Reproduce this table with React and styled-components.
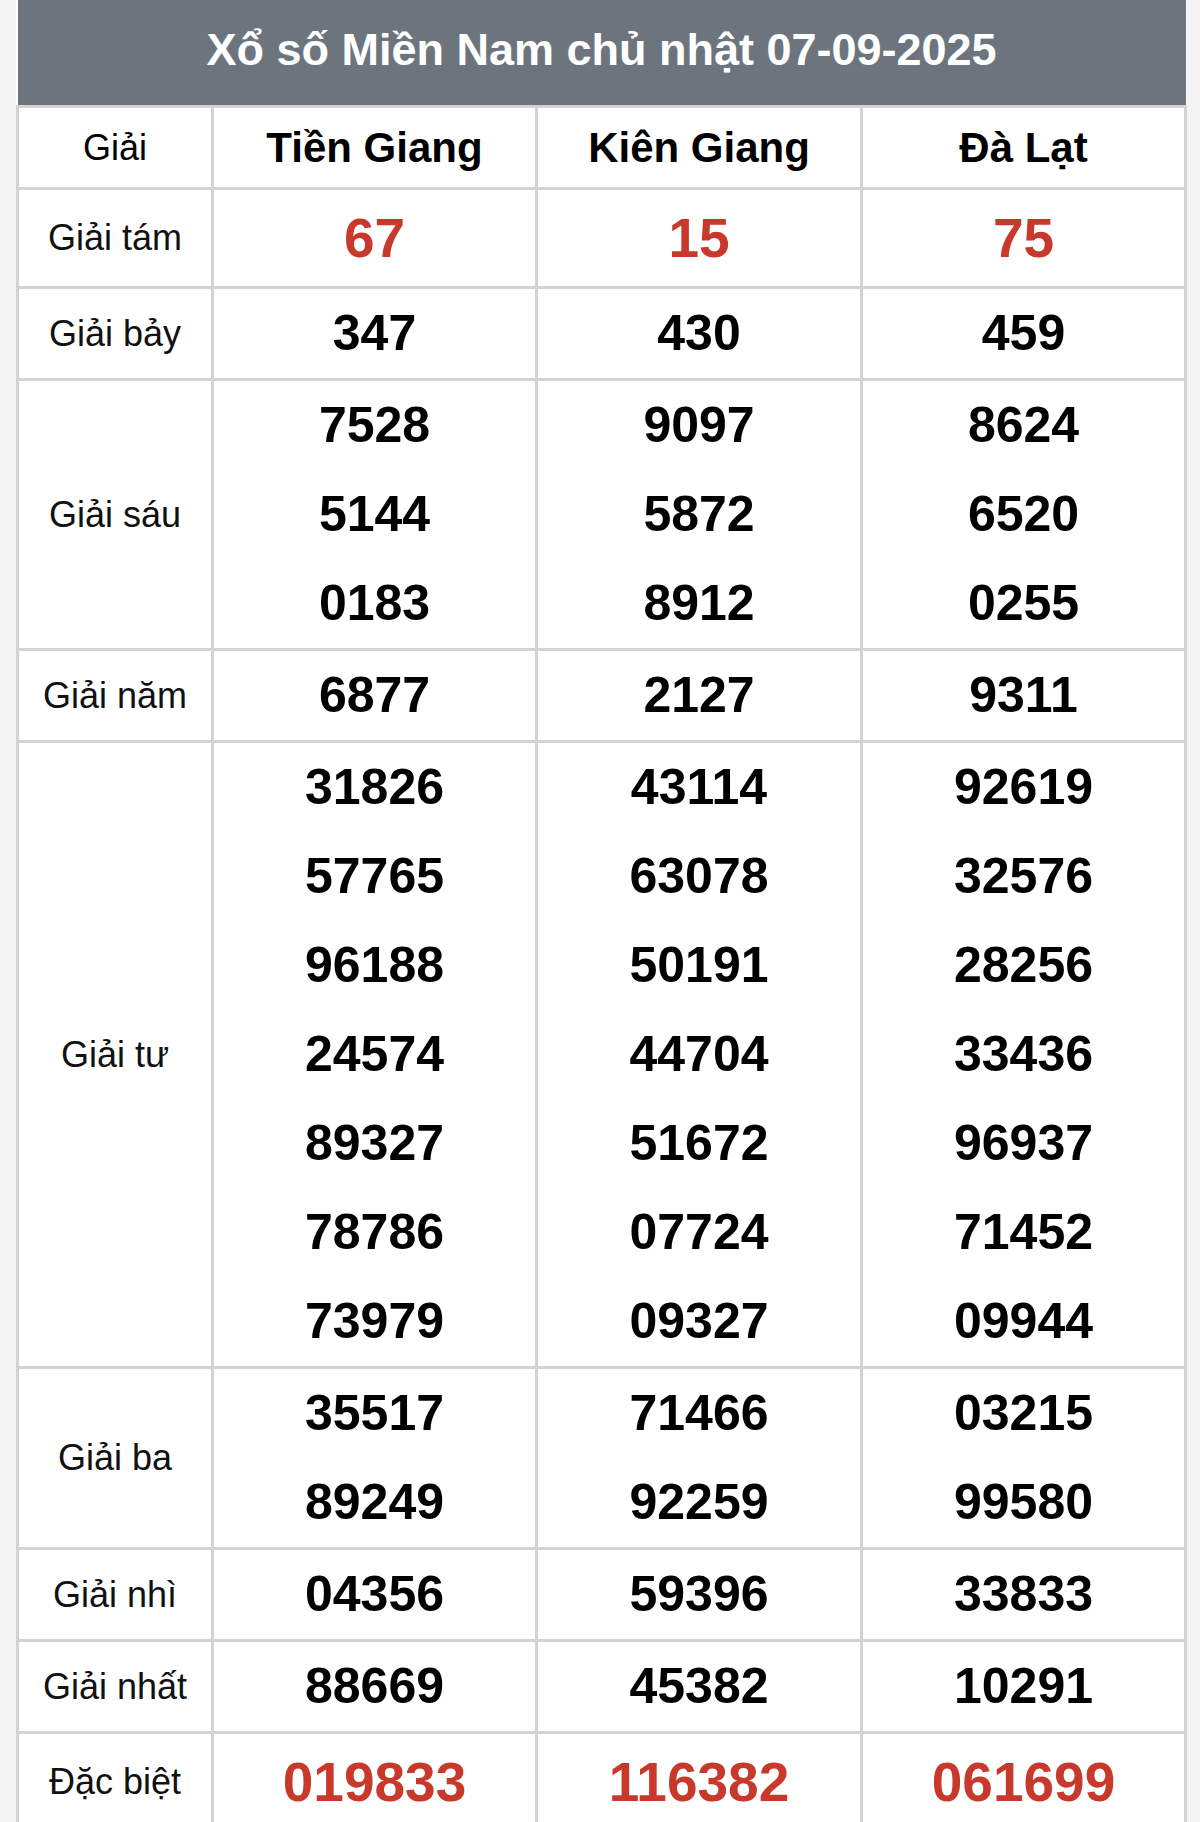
import React from 'react';
import styled, { createGlobalStyle } from 'styled-components';

const GlobalStyle = createGlobalStyle`
  body {
    margin: 0;
    background: #f4f4f4;
    font-family: "Liberation Sans", Arial, sans-serif;
  }
`;

const Wrapper = styled.div`
  padding: 0 16px;
`;

const ResultTable = styled.table`
  width: 100%;
  table-layout: fixed;
  border-collapse: collapse;
  background: #fff;
  color: #000;
  text-align: center;

  & td,
  & th {
    border: 3px solid #d3d3d3;
    padding: 0;
  }
`;

const Col = styled.col`
  width: ${(props) => props.$width}px;
`;

const TitleCell = styled.th`
  height: 99px;
  background: #6c757d;
  color: #fff;
  font-size: 45px;
  font-weight: bold;
  && {
    border: none;
    padding-bottom: 6px;
  }
`;

const HeadCell = styled.th`
  height: 79px;
  font-size: ${(props) => (props.$plain ? '36px' : '42px')};
  font-weight: ${(props) => (props.$plain ? 'normal' : 'bold')};
  color: #000;
`;

const LabelCell = styled.td`
  font-size: 36px;
  color: #111;
  vertical-align: middle;
`;

const NumberCell = styled.td`
  vertical-align: middle;
`;

const NumberLine = styled.div`
  font-weight: bold;
  font-size: ${(props) => (props.$big ? '55px' : '50px')};
  line-height: ${(props) => (props.$big ? '96px' : '89px')};
  color: ${(props) => (props.$big ? '#c8392b' : '#000')};
`;

const provinces = ['Tiền Giang', 'Kiên Giang', 'Đà Lạt'];

const prizes = [
  { label: 'Giải tám', big: true, values: [['67'], ['15'], ['75']] },
  { label: 'Giải bảy', values: [['347'], ['430'], ['459']] },
  {
    label: 'Giải sáu',
    values: [
      ['7528', '5144', '0183'],
      ['9097', '5872', '8912'],
      ['8624', '6520', '0255'],
    ],
  },
  { label: 'Giải năm', values: [['6877'], ['2127'], ['9311']] },
  {
    label: 'Giải tư',
    values: [
      ['31826', '57765', '96188', '24574', '89327', '78786', '73979'],
      ['43114', '63078', '50191', '44704', '51672', '07724', '09327'],
      ['92619', '32576', '28256', '33436', '96937', '71452', '09944'],
    ],
  },
  {
    label: 'Giải ba',
    values: [
      ['35517', '89249'],
      ['71466', '92259'],
      ['03215', '99580'],
    ],
  },
  { label: 'Giải nhì', values: [['04356'], ['59396'], ['33833']] },
  { label: 'Giải nhất', values: [['88669'], ['45382'], ['10291']] },
  { label: 'Đặc biệt', big: true, values: [['019833'], ['116382'], ['061699']] },
];

export default function App() {
  return (
    <Wrapper>
      <GlobalStyle />
      <ResultTable>
        <colgroup>
          <Col $width={195} />
          <Col $width={324} />
          <Col $width={325} />
          <Col $width={324} />
        </colgroup>
        <thead>
          <tr>
            <TitleCell colSpan={4}>Xổ số Miền Nam chủ nhật 07-09-2025</TitleCell>
          </tr>
          <tr>
            <HeadCell $plain>Giải</HeadCell>
            {provinces.map((name) => (
              <HeadCell key={name}>{name}</HeadCell>
            ))}
          </tr>
        </thead>
        <tbody>
          {prizes.map((prize) => (
            <tr key={prize.label}>
              <LabelCell>{prize.label}</LabelCell>
              {prize.values.map((list, i) => (
                <NumberCell key={i}>
                  {list.map((num) => (
                    <NumberLine key={num} $big={prize.big}>
                      {num}
                    </NumberLine>
                  ))}
                </NumberCell>
              ))}
            </tr>
          ))}
        </tbody>
      </ResultTable>
    </Wrapper>
  );
}
